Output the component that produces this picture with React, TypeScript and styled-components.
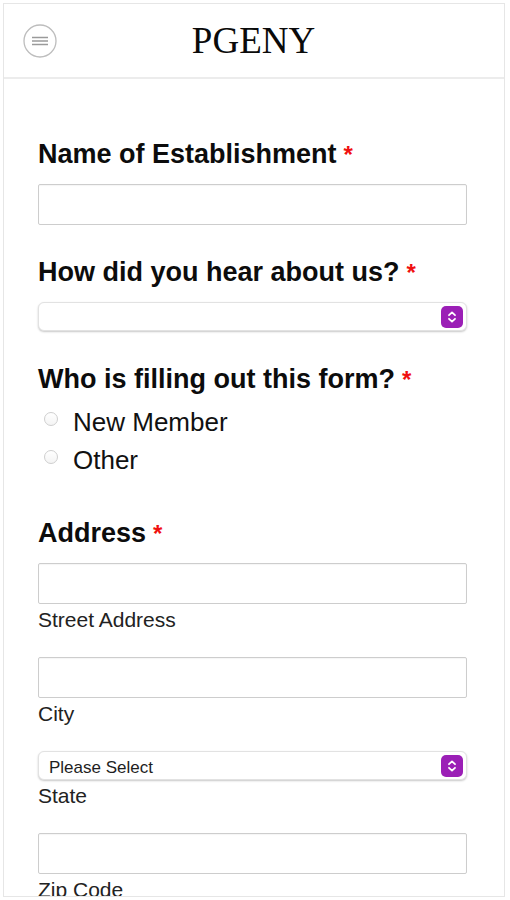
import React from "react";
import styled, { createGlobalStyle } from "styled-components";

const GlobalStyle = createGlobalStyle`
  html, body { margin: 0; padding: 0; background: #ffffff; }
  body { font-family: "Liberation Sans", Arial, Helvetica, sans-serif; color: #111; }
  * { box-sizing: border-box; }
`;

const Frame = styled.div`
  margin: 3px;
  width: 502px;
  height: 894px;
  border: 1px solid #e6e6e6;
  overflow: hidden;
  background: #fff;
`;

const Header = styled.header`
  height: 75px;
  border-bottom: 2px solid #ececec;
  display: grid;
  grid-template-columns: 1fr auto 1fr;
  align-items: center;
  padding: 0 20px 0 19px;
`;

const MenuButton = styled.button`
  width: 34px;
  height: 34px;
  padding: 0;
  border: none;
  background: transparent;
  display: flex;
  align-items: center;
  justify-content: center;
  justify-self: start;
`;

const Logo = styled.h1`
  margin: 0;
  font-family: "Liberation Serif", "Times New Roman", serif;
  font-weight: 400;
  font-size: 37px;
  line-height: 1;
  color: #0a0a0a;
`;

const Content = styled.main`
  padding: 60px 37px 0 34px;
`;

const Group = styled.section<{ $gap?: number }>`
  display: flex;
  flex-direction: column;
  margin-bottom: ${(p) => p.$gap ?? 33}px;
`;

const Label = styled.label<{ $after?: number }>`
  font-size: 27px;
  font-weight: 700;
  line-height: 31px;
  color: #0c0c0c;
  margin-bottom: ${(p) => p.$after ?? 14}px;
`;

const Req = styled.span`
  color: #f01010;
  font-size: 24px;
  font-weight: 700;
  margin-left: 7px;
`;

const TextInput = styled.input`
  width: 100%;
  height: 41px;
  border: 1px solid #cdcdcd;
  border-radius: 2px;
  box-shadow: inset 0 1px 1px rgba(0, 0, 0, 0.04);
  background: #fff;
  outline: none;
  font-family: inherit;
  font-size: 18px;
  padding: 0 10px;
`;

const SelectBox = styled.div`
  width: 100%;
  height: 29px;
  border: 1px solid #e2e2e2;
  border-radius: 6px;
  box-shadow: 0 1px 2px rgba(0, 0, 0, 0.22);
  background: #fff;
  display: flex;
  align-items: center;
  justify-content: space-between;
  padding: 0 3px 0 10px;
`;

const SelectValue = styled.span`
  font-size: 17px;
  color: #1e1e1e;
  line-height: 1;
  padding-top: 4px;
`;

const SelectArrow = styled.span`
  width: 22px;
  height: 22px;
  border-radius: 5px;
  background: #9b1fb6;
  display: flex;
  align-items: center;
  justify-content: center;
`;

const Sub = styled.span`
  font-size: 21px;
  line-height: 24px;
  color: #222;
  margin-top: 4px;
`;

const SubGroup = styled.div`
  display: flex;
  flex-direction: column;
  margin-bottom: 25px;
`;

const RadioRow = styled.label`
  display: flex;
  align-items: center;
  height: 38px;
  font-size: 26px;
  color: #111;
`;

const RadioDot = styled.span`
  width: 14px;
  height: 14px;
  border-radius: 50%;
  border: 1px solid #cfcfcf;
  background: linear-gradient(#ffffff, #f4f4f4);
  margin: -7px 15px 0 6px;
  flex: none;
`;

const Chevrons = () => (
  <svg width="12" height="14" viewBox="0 0 12 14" fill="none">
    <path d="M3 5.2 L6 2.4 L9 5.2" stroke="#fff" strokeWidth="1.8" strokeLinecap="round" strokeLinejoin="round" />
    <path d="M3 8.8 L6 11.6 L9 8.8" stroke="#fff" strokeWidth="1.8" strokeLinecap="round" strokeLinejoin="round" />
  </svg>
);

const MenuIcon = () => (
  <svg width="34" height="34" viewBox="0 0 34 34" fill="none">
    <circle cx="17" cy="17" r="16" stroke="#bdbdbd" strokeWidth="1.3" />
    <path d="M9 13.5 H25 M9 17 H25 M9 20.5 H25" stroke="#9a9a9a" strokeWidth="1.4" />
  </svg>
);

const Select = ({ value }: { value?: string }) => (
  <SelectBox>
    <SelectValue>{value ?? ""}</SelectValue>
    <SelectArrow>
      <Chevrons />
    </SelectArrow>
  </SelectBox>
);

export default function App() {
  return (
    <>
      <GlobalStyle />
      <Frame>
        <Header>
          <MenuButton aria-label="Menu">
            <MenuIcon />
          </MenuButton>
          <Logo>PGENY</Logo>
          <span />
        </Header>
        <Content>
          <Group $gap={32}>
            <Label>
              Name of Establishment<Req>*</Req>
            </Label>
            <TextInput />
          </Group>

          <Group>
            <Label>
              How did you hear about us?<Req>*</Req>
            </Label>
            <Select />
          </Group>

          <Group $gap={39}>
            <Label $after={8}>
              Who is filling out this form?<Req>*</Req>
            </Label>
            <RadioRow>
              <RadioDot />
              New Member
            </RadioRow>
            <RadioRow>
              <RadioDot />
              Other
            </RadioRow>
          </Group>

          <Group>
            <Label>
              Address<Req>*</Req>
            </Label>
            <SubGroup>
              <TextInput />
              <Sub>Street Address</Sub>
            </SubGroup>
            <SubGroup>
              <TextInput />
              <Sub>City</Sub>
            </SubGroup>
            <SubGroup>
              <Select value="Please Select" />
              <Sub>State</Sub>
            </SubGroup>
            <SubGroup>
              <TextInput />
              <Sub>Zip Code</Sub>
            </SubGroup>
          </Group>
        </Content>
      </Frame>
    </>
  );
}
